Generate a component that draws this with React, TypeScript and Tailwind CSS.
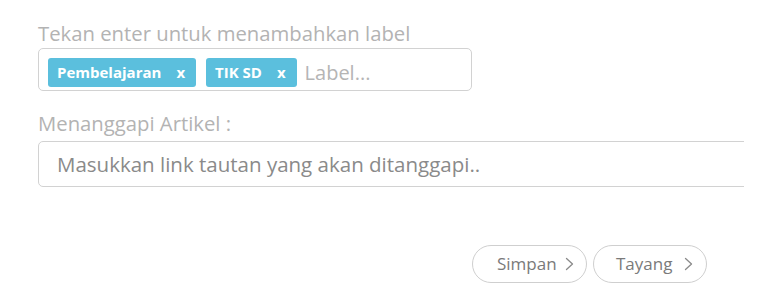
import React from "react";

type Tag = { id: string; text: string };

const TAGS: Tag[] = [
  { id: "t1", text: "Pembelajaran" },
  { id: "t2", text: "TIK SD" },
];

function Chevron() {
  return (
    <svg width="9" height="14" viewBox="0 0 9 14" fill="none" className="shrink-0">
      <polyline points="1.5,1.5 7.5,7 1.5,12.5" stroke="#8a8a8a" strokeWidth="1.3" strokeLinecap="round" strokeLinejoin="round" />
    </svg>
  );
}

function PillButton({ label, className }: { label: string; className: string }) {
  return (
    <button
      className={`flex h-[38px] items-center rounded-full border border-[#cfcfcf] bg-white text-[17px] text-[#7a7a7a] ${className}`}
    >
      <span>{label}</span>
      <Chevron />
    </button>
  );
}

export default function App() {
  return (
    <div className="h-[305px] w-[770px] overflow-hidden bg-white font-['Open_Sans',sans-serif]">
      <div className="w-[744px] overflow-hidden pl-[38px] pt-[19px]">
        {/* Label input */}
        <p className="mb-px text-[20.3px] leading-[28px] text-[#b3b3b3]">Tekan enter untuk menambahkan label</p>
        <div className="flex h-[43px] w-[434px] items-start gap-[10px] rounded-[5px] border border-[#d2d2d2] pl-[9px] pt-[9px]">
          {TAGS.map((tag) => (
            <span
              key={tag.id}
              className="flex h-[29px] items-center rounded-[3px] bg-[#5bbfdd] pl-[9px] pr-[11px] text-[15px] font-bold text-white"
            >
              {tag.text}
              <span className="ml-[15px]">x</span>
            </span>
          ))}
          <span className="-ml-[2px] flex h-[29px] items-center text-[20px] text-[#b5b5b5]">Label...</span>
        </div>

        {/* Menanggapi artikel */}
        <p className="mt-[18px] text-[20.3px] leading-[28px] text-[#b3b3b3]">Menanggapi Artikel :</p>
        <div className="mt-[4px] flex h-[46px] w-[760px] items-center rounded-[5px] border border-[#d2d2d2] pl-[18px] text-[20.5px] text-[#8a8a8a]">
          Masukkan link tautan yang akan ditanggapi..
        </div>

        {/* Actions */}
        <div className="mt-[58px] flex justify-end gap-[6px] pr-[37px]">
          <PillButton label="Simpan" className="w-[115px] gap-[8px] pl-[24px]" />
          <PillButton label="Tayang" className="w-[114px] gap-[12px] pl-[22px]" />
        </div>
      </div>
    </div>
  );
}
